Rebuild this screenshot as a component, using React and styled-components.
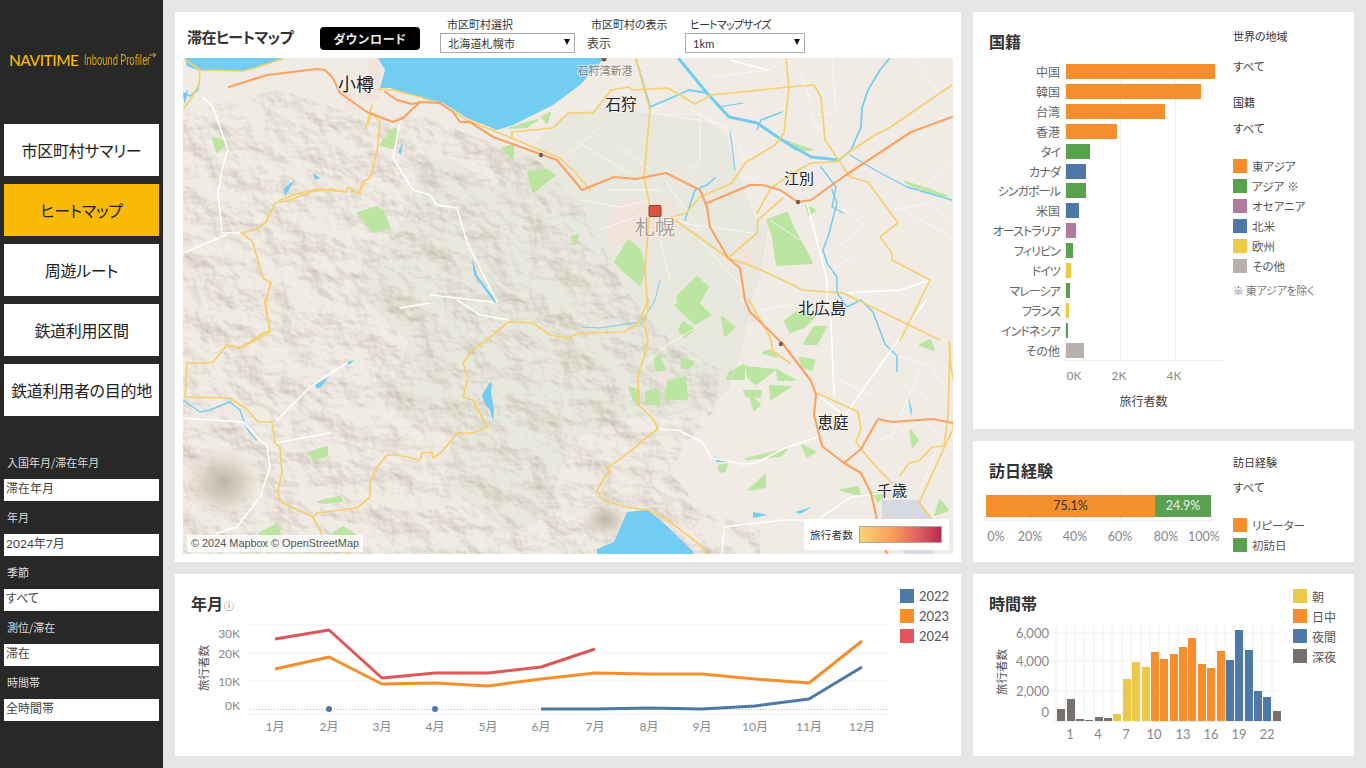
import React from "react";
import styled, { createGlobalStyle } from "styled-components";

const JP = '"Noto Sans CJK JP", sans-serif';
const MIX = 'Lato, "Noto Sans CJK JP", sans-serif';
const C = { orange: "#f58e2c", green: "#59a14f", blue: "#4e79a7", purple: "#b07aa1", yellow: "#edc948", grey: "#bab0ac", brown: "#79706e", red: "#e15759" };

const Global = createGlobalStyle`
  html, body { margin: 0; padding: 0; background: #e6e6e6; }
  body { font-family: ${JP}; overflow: hidden; font-feature-settings: "palt"; }
  * { box-sizing: border-box; }
`;

const Page = styled.div`display: flex; width: 1366px; height: 768px; background: #e6e6e6;`;
const Sidebar = styled.aside`width: 163px; height: 768px; background: #282828; padding: 0 4px; flex: none;`;
const LogoRow = styled.div`position: relative; height: 120px; margin-bottom: 4px; padding-left: 5px; display: flex; align-items: center; gap: 6px; color: #f9ba06;`;
const LogoMain = styled.span`font: 500 15.5px Lato, sans-serif; letter-spacing: -0.5px; width: 69px; white-space: nowrap;`;
const LogoSub = styled.span`font: 400 14px Roboto, sans-serif; color: #d9a20a; transform: scaleX(0.67); transform-origin: left center; white-space: nowrap;`;
const LogoArrow = styled.svg`position: absolute; left: 145px; top: 52px;`;
const Nav = styled.nav`display: flex; flex-direction: column; gap: 8px;`;
const NavButton = styled.div`height: 52px; width: 155px; display: flex; align-items: center; justify-content: center; font-size: 16px; letter-spacing: -0.3px; color: #222; background: ${(p) => (p.$active ? "#f9ba06" : "#fff")};`;
const Filters = styled.div`margin-top: 39px; display: flex; flex-direction: column;`;
const FilterLabel = styled.div`height: 14px; line-height: 14px; font-size: 11px; color: #ddd; padding-left: 3px; margin-bottom: 10px;`;
const FilterValue = styled.div`height: 22px; width: 155px; font: 12px/19px ${MIX}; font-feature-settings: "palt"; color: #444; background: #fff; padding-left: 2px; margin-bottom: 9px;`;

const Main = styled.main`flex: 1; display: grid; grid-template-columns: 786px 381px; gap: 12px; padding: 12px;`;
const Column = styled.div`display: flex; flex-direction: column; gap: 12px;`;
const Panel = styled.section`background: #fff; height: ${(p) => p.$h}px; display: flex; flex-direction: ${(p) => p.$dir || "row"}; padding: ${(p) => p.$pad || 0};`;
const Toolbar = styled.div`display: flex; height: 46px; padding: 5px 0 0 4px; flex: none;`;
const MapTitle = styled.h2`margin: 10px 0 0; width: 133px; font-size: 15px; line-height: 20px; font-weight: 700; color: #333; white-space: nowrap; letter-spacing: -0.6px;`;
const Download = styled.div`margin-top: 10px; width: 100px; height: 23px; border-radius: 4px; background: #000; color: #eee; font-size: 12px; font-weight: 700; display: flex; align-items: center; justify-content: center; letter-spacing: 0.8px;`;
const Field = styled.div`width: ${(p) => p.$w}px; margin-left: ${(p) => p.$ml}px; flex: none;`;
const FieldLabel = styled.div`height: 16px; line-height: 14px; font-size: 11px; color: #333; padding-left: ${(p) => p.$indent}px; letter-spacing: ${(p) => p.$ls || 0}px; white-space: nowrap;`;
const SelectBox = styled.div`height: 20px; border: 1px solid #aaa; position: relative; font: 11px/19px ${MIX}; font-feature-settings: "palt"; color: #333; padding-left: 7px; letter-spacing: 0.2px;
  &::after { content: ""; position: absolute; right: 4px; top: 5px; border-left: 3.5px solid transparent; border-right: 3.5px solid transparent; border-top: 6px solid #111; }`;
const PlainValue = styled.div`font-size: 12px; line-height: 20px; color: #444;`;
const MapFrame = styled.div`position: relative; width: 770px; height: 496px; flex: none; overflow: hidden; background: #f0eae3;`;
const MapSvg = styled.svg`display: block;`;
const Attribution = styled.div`position: absolute; left: 4px; bottom: 2px; height: 17px; padding: 0 4px; background: rgba(255,255,255,0.8); font: 10.9px/17px "Liberation Sans", sans-serif; color: #555; white-space: nowrap;`;
const HeatLegend = styled.div`position: absolute; right: 4px; bottom: 4px; width: 145px; height: 31px; background: #fff; display: flex; align-items: center; justify-content: space-between; padding: 0 7px 0 6px; font-size: 10.5px; color: #333; letter-spacing: .3px;`;
const HeatBar = styled.div`width: 83px; height: 17px; border: 1px solid #aaa; background: linear-gradient(90deg, #f6d470, #fb9c5b 40%, #e2635f 70%, #b82c4e);`;

const Road = styled.polyline`fill: none; stroke-linejoin: round; stroke-linecap: round;
  stroke: ${(p) => ({ yellow: "#f6d06c", orange: "#fba262", white: "#fff", thin: "#fbfaf7", river: "#73cdf2", border: "#dfdfdf" }[p.$k])};
  stroke-width: ${(p) => ({ yellow: 1.7, orange: 2.1, white: 1.5, thin: 0.8, river: 1.5, border: 0.8 }[p.$k])};`;
const Park = styled.polygon`fill: #bde5a2; stroke: #bde5a2; stroke-width: 2; stroke-linejoin: round;`;
const Water = styled.polygon`fill: #73cdf2;`;
const Place = styled.text`font-family: ${JP}; font-size: ${(p) => p.$size || 16}px; fill: ${(p) => p.$fill || "#222"}; paint-order: stroke; stroke: rgba(255,255,255,0.55); stroke-width: 2px; text-anchor: middle;`;
const Dot = styled.circle`fill: #7b5a48;`;

const ChartColumn = styled.div`width: ${(p) => p.$w}px; flex: none; position: relative; padding-left: ${(p) => p.$pl || 0}px;`;
const CardTitle = styled.h3`margin: 19px 0 0 ${(p) => p.$ml || 0}px; height: 20px; font-size: 16px; line-height: 20px; font-weight: 700; color: #333;`;
const InfoMark = styled.span`font-size: 10px; line-height: 1; font-weight: 400; color: #555; margin-left: 1px;`;
const NatChart = styled.div`position: relative; margin-top: 10.500px;`;
const NatRow = styled.div`height: 19.93px; display: flex; align-items: center; position: relative; z-index: 1;`;
const NatLabel = styled.div`width: 71px; text-align: right; font-size: 12px; color: #666; margin-right: 6px; white-space: nowrap; letter-spacing: ${(p) => (p.$kana ? "-0.9px" : "0")};`;
const NatBar = styled.div`height: 15px; background: ${(p) => p.$c};`;
const GridLine = styled.div`position: absolute; top: 2px; height: 296px; width: 1px; background: #f0f0f0;`;
const NatAxis = styled.div`position: absolute; left: 76px; top: 298px; width: 158px; height: 1px; background: #eee;`;
const NatTicks = styled.div`position: relative; height: 33px;`;
const NatTick = styled.span`position: absolute; top: 8px; transform: translateX(-50%); font: 12px/16px Lato, sans-serif; color: #888;`;
const AxisName = styled.div`text-align: center; font-size: 12px; line-height: 16px; color: #444; margin-left: 75px; width: 159px;`;
const LegendCol = styled.div`padding-top: ${(p) => p.$pt}px; padding-left: ${(p) => p.$pl || 0}px;`;
const FilterHead = styled.div`height: 14px; line-height: 14px; font-size: 11px; color: #333; margin-top: ${(p) => p.$mt || 0}px;`;
const FilterAll = styled.div`height: 16px; line-height: 16px; font-size: 11.5px; color: #444; margin-top: ${(p) => p.$mt}px;`;
const SwatchList = styled.div`margin-top: ${(p) => p.$mt || 0}px;`;
const SwatchRow = styled.div`height: 20px; display: flex; align-items: center; gap: 5px; font: ${(p) => p.$size || 11.5}px ${MIX}; font-feature-settings: "palt"; color: #555; white-space: nowrap;`;
const Swatch = styled.i`display: block; width: 14px; height: 14px; background: ${(p) => p.$c}; flex: none;`;
const Note = styled.div`margin-top: 7px; font-size: 11px; line-height: 14px; color: #777; letter-spacing: -0.3px;`;

const StackWrap = styled.div`position: relative; margin-top: 15px; width: 225px; height: 22px; display: flex;`;
const StackPart = styled.div`height: 22px; background: ${(p) => p.$c}; color: ${(p) => p.$t}; font: 12.5px/22px Lato, sans-serif; text-align: center; position: relative; z-index: 1;`;
const StackTick = styled.span`position: absolute; top: -4px; height: 29px; width: 1px; background: #eee;`;
const StackAxis = styled.div`width: 226px; height: 1px; background: #eee; margin-top: 3px;`;
const StackLabels = styled.div`position: relative; height: 20px;`;
const StackLabel = styled.span`position: absolute; top: 8px; transform: translateX(-50%); font: 12.5px/16px Lato, sans-serif; color: #888;`;
const Plot = styled.svg`display: block; margin-top: 9px;`;
const Tick = styled.text`font-family: ${MIX}; font-size: ${(p) => p.$size || 12}px; fill: #888; text-anchor: ${(p) => p.$a || "middle"};`;
const AxisTitle = styled.text`font-family: ${JP}; font-size: 11.5px; fill: #555; text-anchor: middle;`;
const Gl = styled.line`stroke: ${(p) => p.$c || "#f0f0f0"}; stroke-width: 1; stroke-dasharray: ${(p) => p.$dash || "none"};`;
const Series = styled.polyline`fill: none; stroke: ${(p) => p.$c}; stroke-width: 3; stroke-linejoin: round;`;

const yellow = [
  "225,348 226,345 240,348 250,342 263,333 270,331 265,303 271,283 263,278 253,243 251,240 241,233 255,230 266,222 273,208 275,203 290,200 310,192 330,189 346,192 348,187 358,194 365,183",
  "280,200 300,193 317,189 347,192",
  "358,194 360,193 362,182 370,178 377,152 380,122",
  "380,122 372,113 366,128 372,105",
  "265,300 270,332 252,342 240,348 227,345 213,362 208,363 187,363 185,397 230,398 248,410 258,422 272,422 275,443 280,447 282,473 278,490 280,502 313,517 320,530 323,540 337,547 350,554",
  "313,517 317,513 357,508 370,497 370,483 377,467 387,455 397,455 420,460 422,453 432,452 433,458 442,452 457,433 473,433 487,427 480,413 473,400 463,397 468,378 463,363 473,350 493,335 508,322 533,323 550,335 567,338 580,333 624,332 638,324 644,310 649,300",
  "658,429 648,436 631,451 607,468 610,473 605,476 597,491 604,500 624,507 648,510 668,520 699,544 707,554",
  "658,429 653,419 639,405 638,375 644,358 648,341 644,324 648,310 645,270 650,207 644,177 650,110 636,59",
  "512,137 512,132 553,128 568,113 593,113 611,90 629,87 632,90 668,88 695,104 711,95 789,87 814,85 821,97 825,140 850,177 868,182 898,223 880,237 892,253 892,260 930,280 908,325 900,340",
  "843,293 940,340",
  "675,220 728,258 740,262 757,268 793,285 802,290 843,293",
  "728,258 757,233 758,220 783,198",
  "952,85 889,128 875,135 852,150 836,162 811,163 793,173 771,188 757,213",
  "789,87 786,59", "789,87 784,133 775,145 745,163 732,183 700,197 686,213 671,217",
  "817,393 858,412 861,429 856,442 861,449 878,469 892,483",
  "749,300 770,337 773,351 790,363",
  "949,342 951,368 956,390 953,429 939,459 919,503 936,524",
  "950,345 948,415 944,446 932,447 919,461 909,463 900,476",
  "378,89 392,90 420,97 443,105 467,120 497,132 540,150 560,158 575,172 590,190",
  "186,60 200,70 243,71 255,68 283,59", "200,71 199,85 190,100 184,108",
];
const orange = [
  "229,87 267,75 317,69 325,70 333,78 340,93 367,112 393,122 403,118 420,102 440,103 453,112 460,122 470,122 493,137 540,154 557,160 567,172 582,190 614,177 636,179 666,173 700,190 707,207 710,227 728,258 740,268 745,300 750,312 783,344 811,381 816,395 814,415 822,446 844,463 861,473 871,493 878,524 887,554",
  "385,92 397,100 412,104 420,102",
  "707,203 750,185 762,185 780,190 798,202 811,200 846,175 911,132 952,117",
  "844,463 861,449 878,419 892,422 933,419 958,424",
];
const white = [
  "202,97 213,107 228,150 222,170 218,193 222,233 241,233",
  "183,253 226,235",
  "400,122 393,158 413,190 430,195 437,205 457,208 467,242 497,302",
  "430,295 493,302",
  "180,418 243,422 260,440 267,445 270,467 260,497 237,527 217,533",
  "275,443 330,433",
  "347,363 320,380 307,390 277,420",
  "430,303 400,308",
  "457,300 480,315 508,320",
  "658,429 678,430 702,442 711,458 743,464 756,463 783,449 817,437 844,415 817,395",
  "724,527 783,520 817,520 851,497 882,493",
  "724,530 722,554",
  "831,320 834,395", "845,415 887,356 926,300",
  "807,203 827,280 827,310 831,320",
  "843,293 900,290 930,280", "730,60 768,70",
];
const thin = [
  "711,77 768,70 787,59", "832,59 836,110 811,117 825,140", "914,59 939,93 952,85", "952,163 900,207 952,238",
  "838,247 865,225 838,205", "895,210 928,203 952,222", "823,277 857,253", "568,155 600,127", "621,147 650,170",
  "579,143 629,173", "700,113 700,160 686,173", "650,113 721,123", "580,200 620,207 650,200", "673,220 693,225 713,227 753,233",
  "690,110 730,130 745,160", "600,230 640,215", "610,190 660,190", "660,240 670,280", "700,240 745,290", "665,180 700,230",
  "745,175 790,200", "770,220 800,240", "740,300 760,310 790,305", "880,440 925,420 940,440 920,490", "905,385 930,400",
  "897,356 930,365 950,395", "920,370 890,440", "840,380 870,395", "640,370 660,350 700,325", "800,70 810,100",
];
const rivers = [
  ["679,59 707,93 729,117 757,123 782,140 811,157 839,160", 3], ["839,160 851,150 861,127 862,108 868,90 880,70 889,59", 1.8],
  ["636,59 646,93 650,107 671,98 689,90 707,93", 1.8], ["757,130 761,120 782,112", 1.5], ["718,107 743,103", 1.2],
  ["850,155 875,170 907,187 952,200", 1.4], ["821,167 836,187 832,207 843,213", 1.4],
  ["832,190 837,203 828,237 823,250 827,263 837,277 837,293 847,307 861,300 873,312 885,344 897,356 897,371", 1.5],
  ["183,400 200,412 210,410 222,405 230,402 240,410 245,425 252,435 256,440", 1.4],
  ["730,130 735,170", 1], ["183,93 190,96 198,90 199,82", 1.5], ["685,220 695,190 707,185 715,178", 1.5], ["660,280 655,300 640,325", 1],
  ["582,327 600,328 620,325 640,322", 1],
];
const parks = [
  "695,300 710,315 695,324 675,305", "722,317 734,327 725,336", "683,322 694,329 685,337 679,330", "660,356 665,370 656,370 655,358",
  "682,358 694,362 690,368 682,368", "668,382 685,377 687,399 665,399", "646,392 658,389 660,404 646,404", "629,387 639,391 639,406 634,400",
  "729,373 744,365 744,379 727,379", "746,367 775,370 756,384 748,377", "777,370 795,380 778,380", "770,386 790,387 771,399",
  "744,391 761,391 760,397 746,396", "763,353 777,357 770,350", "800,358 814,360 812,370 802,366", "785,321 797,312 814,317 804,327 790,332",
  "814,327 826,327 817,344 804,344", "746,459 787,449 780,456", "802,445 815,452 807,457", "749,490 765,475 765,487", "841,490 858,487 860,495",
  "719,466 727,464 725,471 720,472", "873,493 885,493 878,502", "380,145 395,128 398,135 393,148", "358,213 377,207 383,212 390,228 372,232",
  "503,148 513,145 513,160", "528,172 547,170 555,175 533,192", "510,128 537,120 527,127", "542,117 550,113 547,123", "572,237 578,235 575,244",
  "308,453 327,447 327,455 315,460", "318,502 340,497 342,501 325,503", "260,533 278,524 280,537 268,552", "333,533 343,527 355,535 345,545",
  "213,138 227,143 217,152", "767,220 787,213 793,227 807,253 812,263 777,265 773,237", "677,297 697,277 708,287 693,313 680,307",
  "628,240 640,250 645,268 640,285 625,272 615,262", "750,395 760,405 754,410", "920,345 930,340 934,350", "910,430 918,440 913,447", "940,500 948,510 935,515",
  "905,182 925,188 946,196 925,192", "782,140 800,146 812,150 795,150", "806,205 815,210 809,215",
];
const lakes = [
  "627,512 648,510 668,527 688,547 693,551 693,554 597,554 597,549 614,542 622,524", "343,350 347,362 355,360 348,365", "315,385 328,377 322,386 317,389",
  "482,395 490,382 492,384 491,392 494,410 493,422 490,410 484,402", "284,188 295,180 285,196", "313,173 320,178 315,180", "398,152 403,142 401,155", "472,258 477,275 497,302 494,302 474,275",
  "183,95 188,90 185,105", "713,457 730,462 717,462", "753,512 768,515 753,518", "795,512 812,507 800,514", "908,395 912,410 911,417", "890,380 893,370",
];
const plain = "418,168 428,160 453,160 480,182 493,188 513,162 530,150 540,140 552,125 560,118 600,108 650,115 700,118 725,135 735,170 745,195 755,220 767,227 760,270 750,303 742,344 729,388 709,408 658,415 614,417 600,429 580,435 560,467 547,517 507,530 443,483 447,467 453,433 447,417 398,417 393,380 410,342 367,300 363,295 362,262 377,255 403,225 413,195";
const mountains = "183,110 280,90 340,110 420,115 470,135 530,155 575,190 590,225 610,260 625,290 650,320 670,340 690,350 720,370 715,410 690,440 670,470 700,510 760,530 760,554 183,554";

const HeatMap = () => (
  <MapSvg width="770" height="496" viewBox="183 58 770 496">
    <defs>
      <filter id="hill" x="0" y="0" width="100%" height="100%" colorInterpolationFilters="sRGB">
        <feTurbulence type="fractalNoise" baseFrequency="0.028 0.036" numOctaves="4" seed="8" />
        <feDiffuseLighting surfaceScale="4" diffuseConstant="1" lightingColor="#fff">
          <feDistantLight azimuth="315" elevation="55" />
        </feDiffuseLighting>
        <feGaussianBlur stdDeviation="0.6" />
        <feColorMatrix values="0 0 0 0 0.55  0 0 0 0 0.5  0 0 0 0 0.4  -0.95 0 0 0 0.82" />
      </filter>
      <clipPath id="mts"><polygon points={mountains} /></clipPath>
      <radialGradient id="yotei">
        <stop offset="0" stopColor="#bcb5a3" stopOpacity="0.95" />
        <stop offset="0.45" stopColor="#cdc7b7" stopOpacity="0.7" />
        <stop offset="1" stopColor="#e8e2d8" stopOpacity="0" />
      </radialGradient>
    </defs>
    <rect x="183" y="58" width="770" height="496" fill="#f1ebe5" />
    <polygon points={plain} fill="#e9e8de" />
    <g clipPath="url(#mts)"><rect x="183" y="58" width="770" height="496" filter="url(#hill)" /></g>
    <ellipse cx="223" cy="483" rx="42" ry="38" fill="url(#yotei)" />
    <ellipse cx="605" cy="520" rx="26" ry="20" fill="url(#yotei)" />
    <g fill="#f3e2da" opacity="0.85">
      <rect x="618" y="200" width="58" height="40" /><rect x="610" y="215" width="25" height="30" /><rect x="368" y="58" width="12" height="42" />
      <rect x="358" y="78" width="16" height="22" /><rect x="345" y="93" width="10" height="18" /><rect x="740" y="250" width="14" height="16" />
      <rect x="748" y="312" width="10" height="10" /><rect x="658" y="373" width="10" height="10" />
    </g>
    <polygon points="882,500 919,500 936,524 933,554 905,554 882,519" fill="#d6d9e2" />
    {parks.map((p) => <Park key={p} points={p} />)}
    <Water points="378,58 604,58 593,71 580,85 553,105 513,125 497,130 467,118 443,103 420,97 390,88 380,88 385,70" />
    <Water points="185,58 283,58 255,68 243,71 200,71 187,66" />
    {lakes.map((p) => <Water key={p} points={p} />)}
    <Road $k="border" points={plain} />
    {rivers.map(([p, w]) => <Road key={p} $k="river" points={p} style={{ strokeWidth: w }} />)}
    {thin.map((p) => <Road key={p} $k="thin" points={p} />)}
    {white.map((p) => <Road key={p} $k="white" points={p} />)}
    {yellow.map((p) => <Road key={p} $k="yellow" points={p} />)}
    {orange.map((p) => <Road key={p} $k="orange" points={p} />)}
    <Dot cx="541" cy="155" r="2.2" /><Dot cx="798" cy="202" r="2.2" /><Dot cx="781" cy="344" r="2.2" /><Dot cx="604" cy="59" r="2.5" />
    <Place x="356" y="91" $size={18}>小樽</Place>
    <Place x="621" y="110" $size={15.5}>石狩</Place>
    <Place x="605" y="75" $size={11} $fill="#8a8178">石狩湾新港</Place>
    <Place x="655" y="235" $size={20} $fill="#a59d96">札幌</Place>
    <Place x="799" y="184" $size={15}>江別</Place>
    <Place x="822" y="314" $size={16}>北広島</Place>
    <Place x="833" y="428" $size={15.5}>恵庭</Place>
    <Place x="892" y="496" $size={15}>千歳</Place>
    <rect x="649" y="205.500" width="12" height="11" rx="1" fill="#e2503f" stroke="#7e4a3a" strokeWidth="1" />
  </MapSvg>
);

const natData = [
  ["中国", 149, C.orange], ["韓国", 135, C.orange], ["台湾", 99, C.orange], ["香港", 51, C.orange], ["タイ", 24, C.green],
  ["カナダ", 20, C.blue], ["シンガポール", 20, C.green], ["米国", 13, C.blue], ["オーストラリア", 10, C.purple], ["フィリピン", 7, C.green],
  ["ドイツ", 5, C.yellow], ["マレーシア", 4, C.green], ["フランス", 3, C.yellow], ["インドネシア", 2, C.green], ["その他", 18, C.grey],
];
const months = [275, 329, 382, 435, 488, 541, 595, 649, 702, 755, 809, 862];
const pts = (ys, from = 0) => ys.map((y, i) => `${months[i + from]},${y}`).join(" ");
const hourTops = [807, 777, 837, 840, 831, 834, 822, 717, 666, 681, 636, 657, 642, 621, 594, 672, 684, 633, 660, 570, 630, 753, 771, 813];
const hourX = [261, 291, 318, 345, 375, 402, 429, 459, 486, 516, 543, 570, 600, 627, 654, 684, 711, 741, 768, 795, 825, 852, 879, 909];
const hourColor = (i) => (i < 6 || i === 23 ? C.brown : i < 10 ? C.yellow : i < 18 ? C.orange : C.blue);

const LineChart = () => (
  <Plot width="715" height="134" viewBox="175 622 715 134">
    {[625, 653, 681].map((y) => <Gl key={y} x1="247" x2="888" y1={y} y2={y} />)}
    <Gl x1="250" x2="888" y1="709.500" y2="709.500" $c="#b5b5b5" $dash="1 2" />
    <Gl x1="247" x2="888" y1="714.500" y2="714.500" />
    {[248, 301, 354, 408, 461, 514, 568, 621, 675, 728, 782, 835, 888].map((x) => <Gl key={x} x1={x} x2={x} y1="714" y2="718" />)}
    <Tick x="240" y="638" $a="end">30K</Tick><Tick x="240" y="658" $a="end">20K</Tick><Tick x="240" y="686" $a="end">10K</Tick><Tick x="240" y="710" $a="end">0K</Tick>
    <AxisTitle transform="translate(208 668) rotate(-90)">旅行者数</AxisTitle>
    {months.map((x, i) => <Tick key={x} x={x} y="731">{i + 1}月</Tick>)}
    <Series $c={C.orange} points={pts([669, 657, 684, 683, 686, 679, 673, 674, 674, 679, 683, 641])} />
    <Series $c={C.red} points={pts([639, 630, 678, 673, 673, 667, 649])} />
    <Series $c={C.blue} points={pts([709, 709, 708, 709, 706, 699, 667], 5)} />
    <circle cx="329" cy="709" r="3" fill={C.blue} /><circle cx="435" cy="709" r="3" fill={C.blue} />
  </Plot>
);
const HourChart = () => (
  <Plot width="320" height="134" viewBox="973 622 320 134">
    {[633, 661, 691].map((y) => <Gl key={y} x1="1052" x2="1282" y1={y} y2={y} />)}
    {hourX.map((x) => <Gl key={x} x1={970 + x / 3 - 1} x2={970 + x / 3 - 1} y1="625" y2="721" />)}
    <Gl x1="1052" x2="1282" y1="721.500" y2="721.500" />
    {hourTops.map((t, i) => {
      const y = 440 + t / 3;
      return <rect key={i} x={970 + hourX[i] / 3} y={y} width="8" height={721 - y} fill={hourColor(i)} />;
    })}
    <Tick x="1049" y="638" $a="end" $size={13}>6,000</Tick><Tick x="1049" y="666" $a="end" $size={13}>4,000</Tick>
    <Tick x="1049" y="696" $a="end" $size={13}>2,000</Tick><Tick x="1049" y="717" $a="end" $size={13}>0</Tick>
    <AxisTitle transform="translate(1006 672) rotate(-90)">旅行者数</AxisTitle>
    {[[1, 1070], [4, 1098], [7, 1126], [10, 1154], [13, 1183], [16, 1211], [19, 1239], [22, 1267]].map(([n, x]) => <Tick key={n} x={x} y="739" $size={13}>{n}</Tick>)}
  </Plot>
);

const navs = [["市区町村サマリー"], ["ヒートマップ", true], ["周遊ルート"], ["鉄道利用区間"], ["鉄道利用者の目的地"]];
const filters = [["入国年月/滞在年月", "滞在年月"], ["年月", "2024年7月"], ["季節", "すべて"], ["測位/滞在", "滞在"], ["時間帯", "全時間帯"]];

export default function App() {
  return (
    <Page>
      <Global />
      <Sidebar>
        <LogoRow>
          <LogoMain>NAVITIME</LogoMain>
          <LogoSub>Inbound Profiler</LogoSub>
          <LogoArrow width="8" height="6" viewBox="0 0 8 6"><path d="M0 3h6M4 1l3 2-3 2" fill="none" stroke="#d9a20a" strokeWidth="1" /></LogoArrow>
        </LogoRow>
        <Nav>
          {navs.map(([t, a]) => <NavButton key={t} $active={a}>{t}</NavButton>)}
        </Nav>
        <Filters>
          {filters.map(([l, v]) => (
            <React.Fragment key={l}>
              <FilterLabel>{l}</FilterLabel>
              <FilterValue>{v}</FilterValue>
            </React.Fragment>
          ))}
        </Filters>
      </Sidebar>
      <Main>
        <Column>
          <Panel $h={550} $dir="column" $pad="0 8px 8px">
            <Toolbar>
              <MapTitle>滞在ヒートマップ</MapTitle>
              <Download>ダウンロード</Download>
              <Field $w={135} $ml={20}>
                <FieldLabel $indent={7}>市区町村選択</FieldLabel>
                <SelectBox>北海道札幌市</SelectBox>
              </Field>
              <Field $w={98} $ml={12}>
                <FieldLabel $indent={4}>市区町村の表示</FieldLabel>
                <PlainValue>表示</PlainValue>
              </Field>
              <Field $w={120} $ml={0}>
                <FieldLabel $indent={5} $ls={-0.8}>ヒートマップサイズ</FieldLabel>
                <SelectBox>1km</SelectBox>
              </Field>
            </Toolbar>
            <MapFrame>
              <HeatMap />
              <Attribution>© 2024 Mapbox © OpenStreetMap</Attribution>
              <HeatLegend>旅行者数<HeatBar /></HeatLegend>
            </MapFrame>
          </Panel>
          <Panel $h={182}>
            <ChartColumn $w={715}>
              <CardTitle $ml={16}>年月<InfoMark>ⓘ</InfoMark></CardTitle>
              <LineChart />
            </ChartColumn>
            <LegendCol $pt={12} $pl={10}>
              <SwatchRow $size={13}><Swatch $c={C.blue} />2022</SwatchRow>
              <SwatchRow $size={13}><Swatch $c={C.orange} />2023</SwatchRow>
              <SwatchRow $size={13}><Swatch $c={C.red} />2024</SwatchRow>
            </LegendCol>
          </Panel>
        </Column>
        <Column>
          <Panel $h={417}>
            <ChartColumn $w={260} $pl={16}>
              <CardTitle>国籍</CardTitle>
              <NatChart>
                <GridLine style={{ left: 131 }} /><GridLine style={{ left: 186 }} /><GridLine style={{ left: 76 }} />
                {natData.map(([n, w, c]) => (
                  <NatRow key={n}><NatLabel $kana={/[ァ-ヶー]/.test(n)}>{n}</NatLabel><NatBar $c={c} style={{ width: w }} /></NatRow>
                ))}
                <NatAxis />
                <NatTicks>
                  <NatTick style={{ left: 85 }}>0K</NatTick><NatTick style={{ left: 130 }}>2K</NatTick><NatTick style={{ left: 185 }}>4K</NatTick>
                </NatTicks>
                <AxisName>旅行者数</AxisName>
              </NatChart>
            </ChartColumn>
            <LegendCol $pt={17}>
              <FilterHead>世界の地域</FilterHead>
              <FilterAll $mt={15}>すべて</FilterAll>
              <FilterHead $mt={21}>国籍</FilterHead>
              <FilterAll $mt={11}>すべて</FilterAll>
              <SwatchList $mt={20}>
                <SwatchRow><Swatch $c={C.orange} />東アジア</SwatchRow>
                <SwatchRow><Swatch $c={C.green} />アジア ※</SwatchRow>
                <SwatchRow><Swatch $c={C.purple} />オセアニア</SwatchRow>
                <SwatchRow><Swatch $c={C.blue} />北米</SwatchRow>
                <SwatchRow><Swatch $c={C.yellow} />欧州</SwatchRow>
                <SwatchRow><Swatch $c={C.grey} />その他</SwatchRow>
              </SwatchList>
              <Note>※ 東アジアを除く</Note>
            </LegendCol>
          </Panel>
          <Panel $h={121}>
            <ChartColumn $w={260} $pl={13}>
              <CardTitle $ml={3}>訪日経験</CardTitle>
              <StackWrap>
                {[0, 44, 89, 134, 180, 225].map((x) => <StackTick key={x} style={{ left: x }} />)}
                <StackPart $c={C.orange} $t="#333" style={{ width: 169 }}>75.1%</StackPart>
                <StackPart $c={C.green} $t="#eee" style={{ width: 56 }}>24.9%</StackPart>
              </StackWrap>
              <StackAxis />
              <StackLabels>
                {[["0%", 10], ["20%", 44], ["40%", 89], ["60%", 134], ["80%", 180], ["100%", 218]].map(([t, x]) => <StackLabel key={t} style={{ left: x }}>{t}</StackLabel>)}
              </StackLabels>
            </ChartColumn>
            <LegendCol $pt={14}>
              <FilterHead>訪日経験</FilterHead>
              <FilterAll $mt={10}>すべて</FilterAll>
              <SwatchList $mt={20}>
                <SwatchRow><Swatch $c={C.orange} />リピーター</SwatchRow>
                <SwatchRow><Swatch $c={C.green} />初訪日</SwatchRow>
              </SwatchList>
            </LegendCol>
          </Panel>
          <Panel $h={182}>
            <ChartColumn $w={320}>
              <CardTitle $ml={16}>時間帯</CardTitle>
              <HourChart />
            </ChartColumn>
            <LegendCol $pt={12}>
              <SwatchRow $size={12}><Swatch $c={C.yellow} />朝</SwatchRow>
              <SwatchRow $size={12}><Swatch $c={C.orange} />日中</SwatchRow>
              <SwatchRow $size={12}><Swatch $c={C.blue} />夜間</SwatchRow>
              <SwatchRow $size={12}><Swatch $c={C.brown} />深夜</SwatchRow>
            </LegendCol>
          </Panel>
        </Column>
      </Main>
    </Page>
  );
}
